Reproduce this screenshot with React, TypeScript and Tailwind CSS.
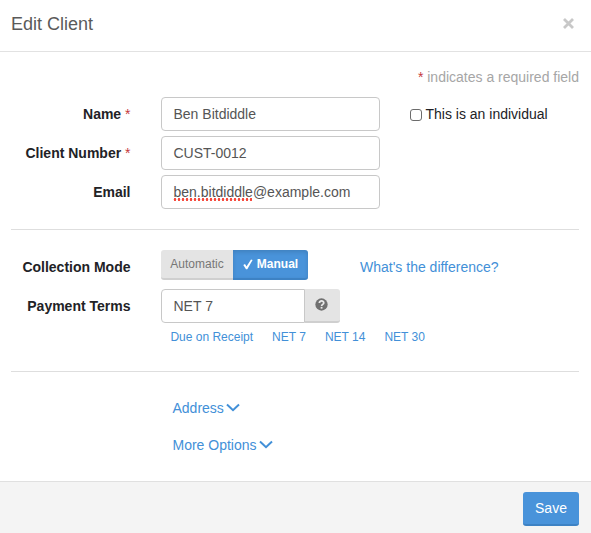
import type { ReactNode } from "react";

const inputBox =
  "h-[34px] border border-[#c8c8c8] bg-white pl-[11.5px] text-[14px] leading-[32px] text-[#555]";

function Label({ children, required = false }: { children: ReactNode; required?: boolean }) {
  return (
    <label className="w-[130.5px] shrink-0 whitespace-nowrap text-right font-bold leading-[34px] text-[#222226]">
      {children}
      {required && <span className="font-normal text-[#c5393c]"> *</span>}
    </label>
  );
}

function Field({ label, required, children, extra }: { label: string; required?: boolean; children: ReactNode; extra?: ReactNode }) {
  return (
    <div className="flex h-[34px] items-center">
      <Label required={required}>{label}</Label>
      <div className={`${inputBox} ml-[30.5px] w-[219px] shrink-0 rounded-[4px]`}>{children}</div>
      {extra}
    </div>
  );
}

function Chevron() {
  return (
    <svg width="14" height="9" viewBox="0 0 14 9" fill="none" stroke="currentColor" strokeWidth="2" className="-mt-px ml-[2.5px]">
      <path d="M1 1.5 7 7.2l6-5.7" />
    </svg>
  );
}

export default function App() {
  return (
    <div className="flex h-[533px] w-[591px] flex-col overflow-hidden bg-white font-['Liberation_Sans',Arial,sans-serif] text-[14px] leading-5 text-[#222226]">
      <header className="flex h-[52px] items-center justify-between border-b border-[#e2e2e2] pb-[3px] pl-[11px] pr-[17px]">
        <h1 className="text-[18px] text-[#5a5a5a]">Edit Client</h1>
        <svg width="11" height="11" viewBox="0 0 11 11" fill="none" stroke="#c8c8c8" strokeWidth="2.8" className="-mt-px">
          <path d="M1 1l9 9M10 1l-9 9" />
        </svg>
      </header>

      <main className="flex-1">
        <p className="pr-3 pt-[15px] text-right text-[#a6a6a6]">
          <span className="text-[#c5393c]">*</span> indicates a required field
        </p>
        <div className="mt-[10px] flex flex-col gap-[5px]">
          <Field
            label="Name"
            required
            extra={
              <div className="ml-[30px] flex items-center">
                <span className="mt-[2px] h-3 w-3 rounded-[3px] border border-[#6c6c6c] bg-white" />
                <span className="ml-[3.5px] whitespace-nowrap">This is an individual</span>
              </div>
            }
          >
            Ben Bitdiddle
          </Field>
          <Field label="Client Number" required>CUST-0012</Field>
          <Field label="Email">
            <span className="relative inline-block">
              ben.bitdiddle
              <span className="absolute bottom-[7px] -left-px right-px h-[3px] bg-[radial-gradient(circle_at_center,#f5483b_1.1px,transparent_1.6px)] bg-[length:4px_3px]" />
            </span>
            @example.com
          </Field>
        </div>

        <hr className="ml-[11px] mr-3 mt-5 border-[#dedede]" />

        <div className="mt-5 flex h-[34px] items-start">
          <Label>Collection Mode</Label>
          <div className="ml-[30.5px] flex h-[30px] shrink-0 text-[12px] leading-[28px]">
            <span className="w-[72px] rounded-l-[3px] border-b-2 border-[#cfcfcf] bg-[#e4e4e4] text-center text-[#777]">Automatic</span>
            <span className="flex w-[75px] items-center justify-center rounded-r-[3px] border-b-2 border-[#3d82c4] bg-[#4993da] font-bold text-white shadow-[inset_0_2px_4px_rgba(0,0,0,0.13)]">
              <svg width="10" height="11" viewBox="0 0 10 11" className="mr-[4px]">
                <path d="M.3 5.9 2 4.9l1.5 2.5L8 .6l1.6.4-5.3 9.2H3z" fill="currentColor" />
              </svg>
              Manual
            </span>
          </div>
          <a className="ml-[52px] whitespace-nowrap leading-[34px] text-[#4290d8]">What's the difference?</a>
        </div>

        <div className="mt-[5px] flex h-[34px]">
          <Label>Payment Terms</Label>
          <div className={`${inputBox} ml-[30.5px] w-[144px] rounded-l-[4px]`}>NET 7</div>
          <div className="flex w-[35px] items-center justify-center rounded-r-[3px] border-b-2 border-[#cfcfcf] bg-[#e4e4e4] pb-px pr-[2px]">
            <svg width="13" height="13" viewBox="0 0 12 12">
              <circle cx="6" cy="6" r="5.7" fill="#707070" />
              <path d="M4 4.7c0-2.7 4.2-2.5 4.1-.1 0 1.3-2 1.3-2 2.7" fill="none" stroke="#e8e8e8" strokeWidth="1.6" />
              <path d="M5.2 8.2h1.7v1.6H5.2z" fill="#e8e8e8" />
            </svg>
          </div>
        </div>
        <div className="ml-[170.4px] mt-[4px] flex gap-[19px] whitespace-nowrap text-[12px] text-[#4290d8]">
          <a>Due on Receipt</a>
          <a>NET 7</a>
          <a>NET 14</a>
          <a>NET 30</a>
        </div>

        <hr className="ml-[11px] mr-3 mt-6 border-[#dedede]" />

        <div className="ml-[172.5px] mt-[26px] flex flex-col gap-[17px] text-[#4290d8]">
          <a className="flex items-center">Address <Chevron /></a>
          <a className="flex items-center">More Options <Chevron /></a>
        </div>
      </main>

      <footer className="flex h-[52px] shrink-0 justify-end border-t border-[#e0e0e0] bg-[#f4f4f4] pr-3 pt-[10px]">
        <button className="h-[34px] w-[56px] rounded-[3px] border-b-2 border-[#3d82c4] bg-[#4993da] text-[14px] text-white">Save</button>
      </footer>
    </div>
  );
}
